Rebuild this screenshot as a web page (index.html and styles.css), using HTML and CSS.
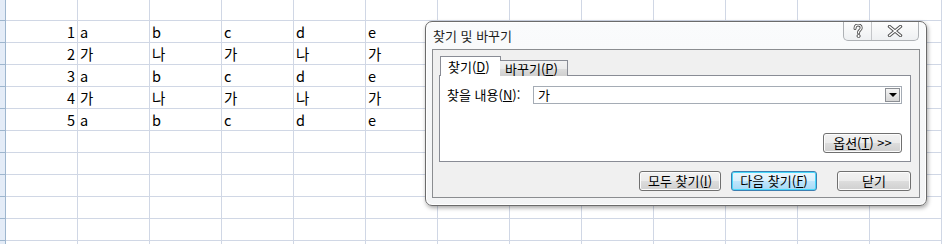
FILE: index.html
```html
<!DOCTYPE html>
<html lang="ko">
<head>
    <meta charset="UTF-8">
    <title>찾기 및 바꾸기</title>
    <link rel="stylesheet" href="styles.css">
</head>
<body>
    <!-- 시트 -->
    <div class="sheet">
        <div class="hdr"></div><div class="c num"></div><div class="c"></div><div class="c"></div><div class="c"></div><div class="c"></div><div class="c"></div><div class="c"></div><div class="c"></div><div class="c"></div><div class="c"></div><div class="c"></div><div class="c"></div><div class="c"></div>
        <div class="hdr"></div><div class="c num">1</div><div class="c">a</div><div class="c">b</div><div class="c">c</div><div class="c">d</div><div class="c">e</div><div class="c"></div><div class="c"></div><div class="c"></div><div class="c"></div><div class="c"></div><div class="c"></div><div class="c"></div>
        <div class="hdr"></div><div class="c num">2</div><div class="c">가</div><div class="c">나</div><div class="c">가</div><div class="c">나</div><div class="c">가</div><div class="c"></div><div class="c"></div><div class="c"></div><div class="c"></div><div class="c"></div><div class="c"></div><div class="c"></div>
        <div class="hdr"></div><div class="c num">3</div><div class="c">a</div><div class="c">b</div><div class="c">c</div><div class="c">d</div><div class="c">e</div><div class="c"></div><div class="c"></div><div class="c"></div><div class="c"></div><div class="c"></div><div class="c"></div><div class="c"></div>
        <div class="hdr"></div><div class="c num">4</div><div class="c">가</div><div class="c">나</div><div class="c">가</div><div class="c">나</div><div class="c">가</div><div class="c"></div><div class="c"></div><div class="c"></div><div class="c"></div><div class="c"></div><div class="c"></div><div class="c"></div>
        <div class="hdr"></div><div class="c num">5</div><div class="c">a</div><div class="c">b</div><div class="c">c</div><div class="c">d</div><div class="c">e</div><div class="c"></div><div class="c"></div><div class="c"></div><div class="c"></div><div class="c"></div><div class="c"></div><div class="c"></div>
        <div class="hdr"></div><div class="c"></div><div class="c"></div><div class="c"></div><div class="c"></div><div class="c"></div><div class="c"></div><div class="c"></div><div class="c"></div><div class="c"></div><div class="c"></div><div class="c"></div><div class="c"></div><div class="c"></div>
        <div class="hdr"></div><div class="c"></div><div class="c"></div><div class="c"></div><div class="c"></div><div class="c"></div><div class="c"></div><div class="c"></div><div class="c"></div><div class="c"></div><div class="c"></div><div class="c"></div><div class="c"></div><div class="c"></div>
        <div class="hdr"></div><div class="c"></div><div class="c"></div><div class="c"></div><div class="c"></div><div class="c"></div><div class="c"></div><div class="c"></div><div class="c"></div><div class="c"></div><div class="c"></div><div class="c"></div><div class="c"></div><div class="c"></div>
        <div class="hdr"></div><div class="c"></div><div class="c"></div><div class="c"></div><div class="c"></div><div class="c"></div><div class="c"></div><div class="c"></div><div class="c"></div><div class="c"></div><div class="c"></div><div class="c"></div><div class="c"></div><div class="c"></div>
        <div class="hdr"></div><div class="c"></div><div class="c"></div><div class="c"></div><div class="c"></div><div class="c"></div><div class="c"></div><div class="c"></div><div class="c"></div><div class="c"></div><div class="c"></div><div class="c"></div><div class="c"></div><div class="c"></div>
        <div class="hdr"></div><div class="c"></div><div class="c"></div><div class="c"></div><div class="c"></div><div class="c"></div><div class="c"></div><div class="c"></div><div class="c"></div><div class="c"></div><div class="c"></div><div class="c"></div><div class="c"></div><div class="c"></div>
    </div>

    <!-- 찾기 및 바꾸기 대화 상자 -->
    <div class="dialog">
        <div class="titlebar">
            <span class="title">찾기 및 바꾸기</span>
            <div class="caption-btns">
                <div class="cap help">
                    <svg width="12" height="14" viewBox="0 0 12 14">
                        <path d="M3 4.5 C3 2 4.5 1 6 1 C8 1 9.2 2.2 9.2 4 C9.2 5.8 7 6.2 6.6 8 L6.6 9" fill="none" stroke="#555" stroke-width="3" stroke-linecap="round"/>
                        <path d="M3 4.5 C3 2 4.5 1 6 1 C8 1 9.2 2.2 9.2 4 C9.2 5.8 7 6.2 6.6 8 L6.6 9" fill="none" stroke="#fff" stroke-width="1.2" stroke-linecap="round"/>
                        <circle cx="6.6" cy="12" r="1.6" fill="#fff" stroke="#555" stroke-width="1"/>
                    </svg>
                </div>
                <div class="cap close">
                    <svg width="16" height="12" viewBox="0 0 16 12">
                        <path d="M2.5 1.5 L13.5 10.5 M13.5 1.5 L2.5 10.5" stroke="#555" stroke-width="3.4" stroke-linecap="round"/>
                        <path d="M2.5 1.5 L13.5 10.5 M13.5 1.5 L2.5 10.5" stroke="#fff" stroke-width="1.4" stroke-linecap="round"/>
                    </svg>
                </div>
            </div>
        </div>
        <div class="client">
            <div class="tabs">
                <div class="tab active">찾기(<u>D</u>)</div>
                <div class="tab">바꾸기(<u>P</u>)</div>
            </div>
            <div class="panel">
                <div class="find-row">
                    <span class="label">찾을 내용(<u>N</u>):</span>
                    <div class="combo">
                        <span>가</span>
                        <div class="drop"><span class="arrow"></span></div>
                    </div>
                </div>
                <div class="opt-row">
                    <button class="btn opt">옵션(<u>T</u>) &gt;&gt;</button>
                </div>
            </div>
            <div class="actions">
                <button class="btn find-all">모두 찾기(<u>I</u>)</button>
                <button class="btn find-next default">다음 찾기(<u>F</u>)</button>
                <button class="btn close-btn">닫기</button>
            </div>
        </div>
    </div>
</body>
</html>
```

FILE: styles.css
```css
html, body {
    height: 244px;
    overflow: hidden;
}
body {
    margin: 0;
    background-color: #fff;
    font-family: "Malgun Gothic", "Noto Sans CJK KR", "Noto Sans", sans-serif;
}
.sheet {
    display: grid;
    grid-template-columns: 6px 72px repeat(12, 72px);
    grid-template-rows: 21px repeat(11, 22px);
    height: 244px;
    overflow: hidden;
}
.hdr {
    background-color: #e4ecf7;
    border-right: 1px solid #9eb6ce;
    border-bottom: 1px solid #9eb6ce;
    box-sizing: border-box;
}
.c {
    box-sizing: border-box;
    border-right: 1px solid #d0d7e5;
    border-bottom: 1px solid #d0d7e5;
    font-size: 14.5px;
    line-height: 21px;
    padding-left: 2px;
    color: #000;
    white-space: nowrap;
}
.c.num {
    text-align: right;
    padding-right: 2px;
}

/* 대화 상자 */
.dialog {
    position: absolute;
    left: 425px;
    top: 21px;
    width: 502px;
    height: 185px;
    box-sizing: border-box;
    border: 1px solid #6b6b6b;
    border-radius: 7px;
    background: linear-gradient(#fafbfc, #f3f4f5);
    box-shadow: 1px 2px 4px rgba(0, 0, 0, 0.35), inset 0 0 0 1px #fff;
    padding: 0 6px 7px 6px;
    display: flex;
    flex-direction: column;
    font-size: 13px;
    color: #000;
}
.titlebar {
    height: 27px;
    display: flex;
    align-items: flex-start;
    justify-content: space-between;
}
.title {
    margin-top: 4px;
    padding-left: 1px;
    font-size: 13px;
    color: #1e1e1e;
}
.caption-btns {
    display: flex;
    height: 18px;
    margin-right: 1px;
    border: 1px solid #aeb1b5;
    border-top: none;
    border-radius: 0 0 5px 5px;
    background: linear-gradient(#fdfdfd, #eef0f2);
    overflow: hidden;
}
.cap {
    display: flex;
    align-items: center;
    justify-content: center;
}
.cap.help {
    width: 27px;
    border-right: 1px solid #c4c6c9;
}
.cap.close {
    width: 46px;
}
.client {
    flex: 1;
    border: 1px solid #8b8d90;
    background-color: #f0f0f0;
    padding: 6px 8px 6px 6px;
    display: flex;
    flex-direction: column;
}
.tabs {
    display: flex;
    align-items: flex-end;
    height: 20px;
    padding-left: 1px;
    position: relative;
    z-index: 1;
}
.tab {
    box-sizing: border-box;
    border: 1px solid #898c95;
    border-bottom: none;
    font-size: 13px;
    line-height: 15px;
}
.tab.active {
    height: 20px;
    width: 61px;
    background-color: #fff;
    padding: 2px 0 0 7px;
}
.tab:not(.active) {
    height: 16px;
    width: 68px;
    margin-left: -1px;
    border-left: none;
    background: linear-gradient(#f2f2f2 0%, #ebebeb 50%, #dddddd 51%, #cfcfcf 100%);
    padding: 0 0 0 5px;
}
.panel {
    margin-top: -1px;
    height: 87px;
    box-sizing: border-box;
    border: 1px solid #898c95;
    background-color: #fff;
    padding: 9px 8px 8px 7px;
    display: flex;
    flex-direction: column;
}
.find-row {
    display: flex;
    align-items: center;
}
.label {
    width: 86px;
}
.combo {
    flex: 1;
    height: 18px;
    box-sizing: border-box;
    border: 1px solid #a5acb5;
    display: flex;
    align-items: center;
    padding-left: 4px;
    justify-content: space-between;
    font-size: 13px;
}
.drop {
    width: 15px;
    height: 14px;
    margin-right: 1px;
    box-sizing: border-box;
    border: 1px solid #8c8f94;
    background: linear-gradient(#f4f4f4, #d6d6d6);
    display: flex;
    align-items: center;
    justify-content: center;
}
.arrow {
    width: 0;
    height: 0;
    border-left: 4px solid transparent;
    border-right: 4px solid transparent;
    border-top: 4px solid #000;
    margin-top: 1px;
}
.opt-row {
    margin-top: auto;
    display: flex;
    justify-content: flex-end;
}
.btn {
    box-sizing: border-box;
    font-family: inherit;
    font-size: 13px;
    color: #000;
    border: 1px solid #707070;
    border-radius: 3px;
    background: linear-gradient(#f2f2f2 0%, #ebebeb 50%, #dddddd 51%, #cfcfcf 100%);
    box-shadow: inset 0 0 0 1px #fcfcfc;
    padding: 0;
    line-height: 16px;
}
.btn.opt {
    width: 79px;
    height: 20px;
}
.actions {
    margin-top: auto;
    display: flex;
    justify-content: flex-end;
    gap: 10px;
}
.actions .btn {
    height: 20px;
}
.btn.find-all {
    width: 82px;
}
.btn.find-next {
    width: 86px;
    margin-right: 10px;
}
.btn.default {
    border-color: #3c7fb1;
    box-shadow: inset 0 0 0 1px #48d8fb;
    background: linear-gradient(#eaf6fd 0%, #d9f0fc 50%, #bee6fd 51%, #a7d9f5 100%);
}
.btn.close-btn {
    width: 74px;
}
```
